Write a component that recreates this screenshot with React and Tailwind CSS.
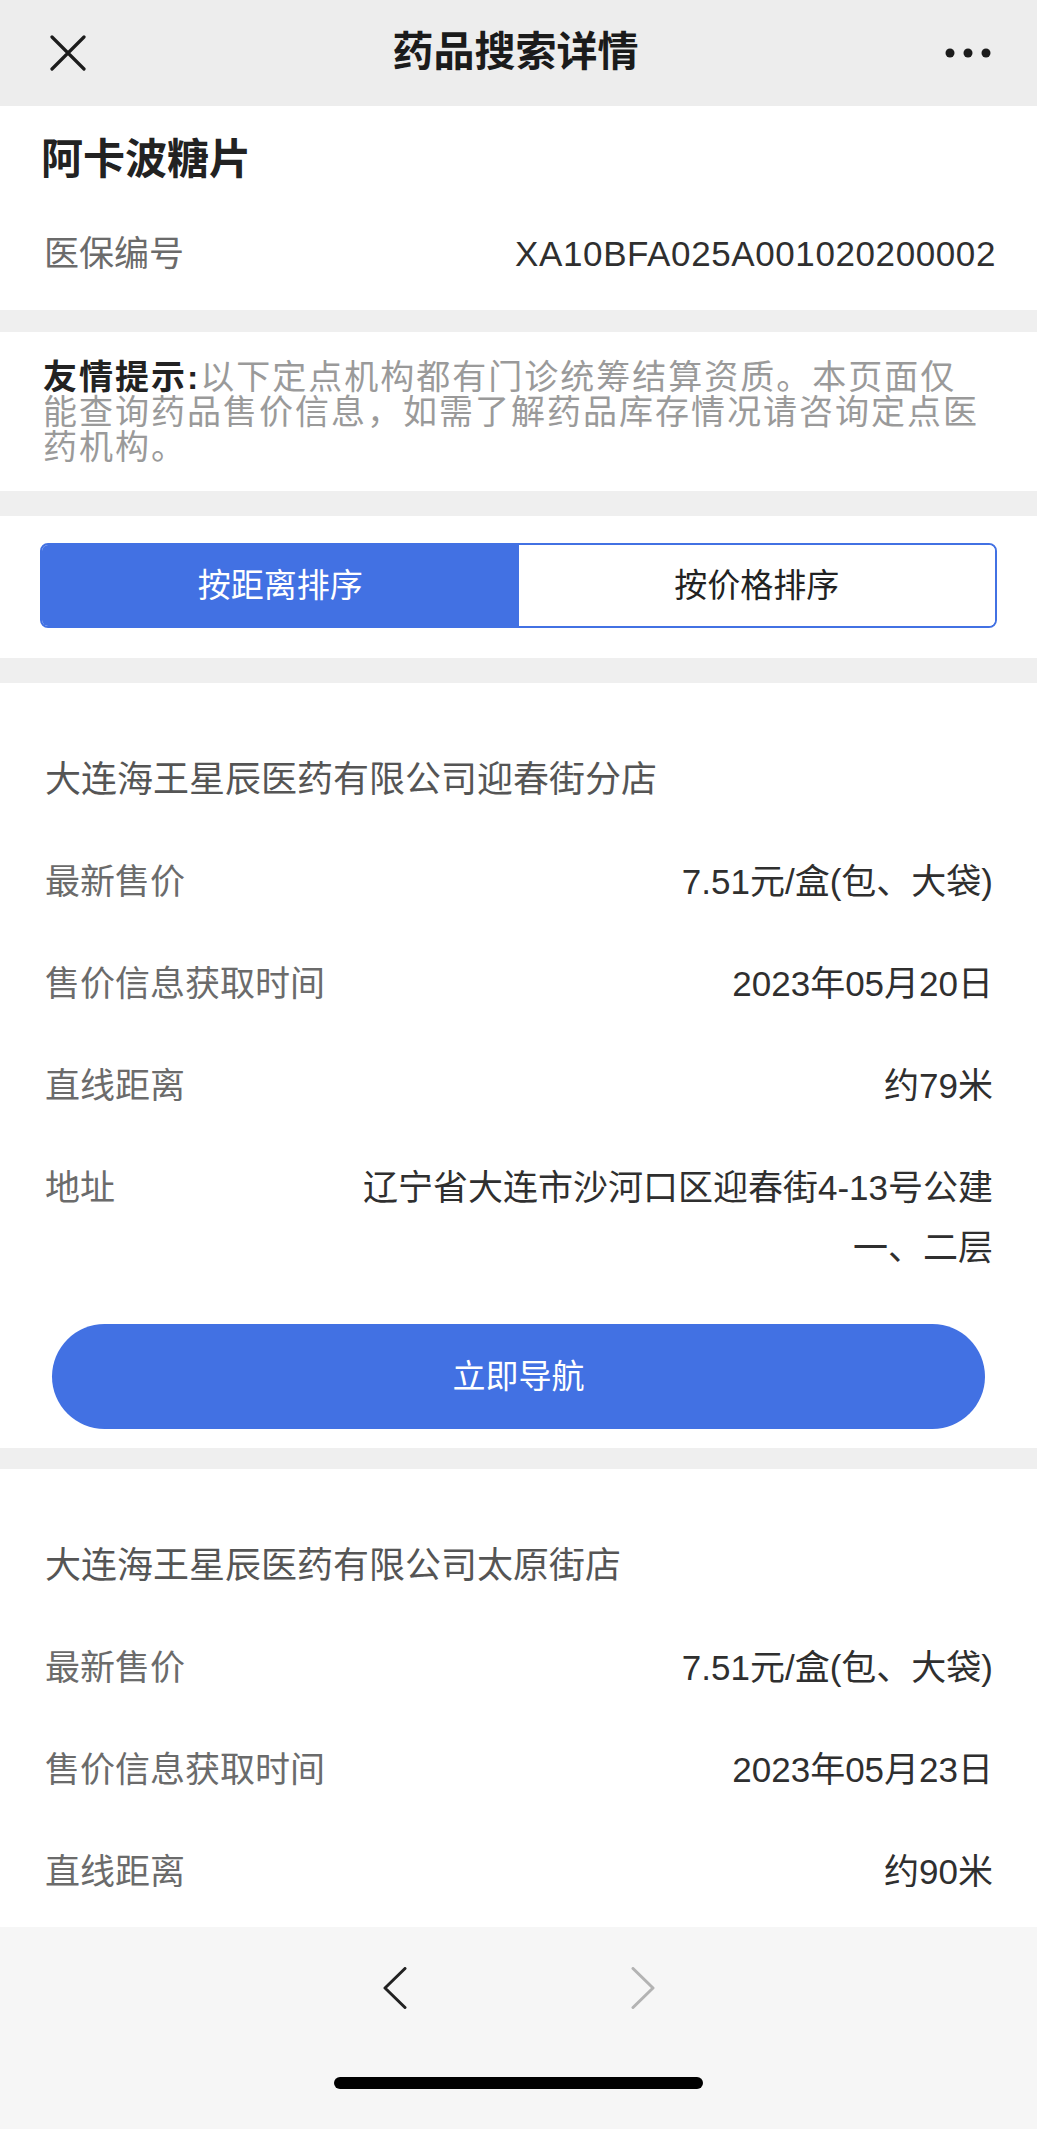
const font = "font-['Liberation_Sans','Noto_Sans_CJK_SC',sans-serif]";

const stores = [
  {
    name: "大连海王星辰医药有限公司迎春街分店",
    price: "7.51元/盒(包、大袋)",
    date: "2023年05月20日",
    distance: "约79米",
    address: "辽宁省大连市沙河口区迎春街4-13号公建一、二层",
  },
  {
    name: "大连海王星辰医药有限公司太原街店",
    price: "7.51元/盒(包、大袋)",
    date: "2023年05月23日",
    distance: "约90米",
    address: "",
  },
];

function Row({ label, children }) {
  return (
    <div className="flex py-[21px] text-[35px] leading-[60px]">
      <div className="w-[290px] shrink-0 text-[#6b6b6b]">{label}</div>
      <div className="flex-1 text-right text-[#2f2f2f]">{children}</div>
    </div>
  );
}

function StoreCard({ store }) {
  return (
    <div className="bg-white pl-[45px] pr-[44px] pt-[46px] pb-[19px]">
      <div className="py-[21px] text-[36px] leading-[60px] text-[#555]">{store.name}</div>
      <Row label="最新售价">{store.price}</Row>
      <Row label="售价信息获取时间">{store.date}</Row>
      <Row label="直线距离">{store.distance}</Row>
      {/* 第二家店的地址和按钮在屏幕外，截图里看不到 */}
      {store.address && (
        <>
          <Row label="地址">{store.address}</Row>
          <button className="mt-[25px] ml-[7px] flex h-[105px] w-[933px] items-center justify-center rounded-full bg-[#4271e3] text-[33px] text-white">
            立即导航
          </button>
        </>
      )}
    </div>
  );
}

export default function App() {
  return (
    <div className={`${font} flex h-[2129px] w-[1037px] flex-col overflow-hidden bg-[#efefef]`}>
      {/* 顶部导航 */}
      <div className="flex h-[106px] shrink-0 items-center justify-between bg-[#ededed] pl-[50px] pr-[46px]">
        <svg width="36" height="36" viewBox="0 0 36 36" className="text-[#1c1c1c]">
          <path d="M2 2 L34 34 M34 2 L2 34" stroke="currentColor" strokeWidth="3.2" strokeLinecap="round" />
        </svg>
        <div className="text-[41px] font-bold text-[#1b1b1b]">药品搜索详情</div>
        <svg width="46" height="12" viewBox="0 0 46 12" className="text-[#1c1c1c]">
          <circle cx="5" cy="6" r="4.5" fill="currentColor" />
          <circle cx="23" cy="6" r="4.5" fill="currentColor" />
          <circle cx="41" cy="6" r="4.5" fill="currentColor" />
        </svg>
      </div>

      <div className="flex-1 overflow-hidden">
        <div className="bg-white px-[41px] pt-[24px] pb-[26px]">
          <div className="text-[42px] font-bold leading-[60px] text-[#222]">阿卡波糖片</div>
          <div className="mt-[34px] flex justify-between text-[35px] leading-[60px]">
            <span className="pl-[3px] text-[#6b6b6b]">医保编号</span>
            <span className="tracking-[0.6px] text-[#2f2f2f]">XA10BFA025A001020200002</span>
          </div>
        </div>

        <div className="mt-[22px] bg-white pl-[43px] pr-[20px] pt-[28px] pb-[26px] text-[34px] leading-[35px] tracking-[2px] text-[#9a9a9a]">
          <span className="font-bold text-[#222]">友情提示:</span>以下定点机构都有门诊统筹结算资质。本页面仅
          <br />
          能查询药品售价信息，如需了解药品库存情况请咨询定点医
          <br />
          药机构。
        </div>

        <div className="mt-[25px] bg-white px-[40px] pt-[27px] pb-[30px]">
          <div className="flex h-[85px] overflow-hidden rounded-[8px] border-2 border-[#4271e3] text-[33px]">
            <div className="flex flex-1 items-center justify-center bg-[#4271e3] text-white">按距离排序</div>
            <div className="flex flex-1 items-center justify-center bg-white text-[#222]">按价格排序</div>
          </div>
        </div>

        <div className="mt-[25px] flex flex-col gap-[21px]">
          {stores.map((s) => (
            <StoreCard key={s.name} store={s} />
          ))}
        </div>
      </div>

      {/* 底部工具栏 */}
      <div className="flex h-[202px] shrink-0 flex-col items-center bg-[#f6f6f6] pt-[40px]">
        <div className="flex gap-[222px]">
          <svg width="26" height="42" viewBox="0 0 26 42">
            <path d="M23 1.5 L3 21 L23 40.5" fill="none" stroke="#222" strokeWidth="3" strokeLinecap="round" strokeLinejoin="round" />
          </svg>
          <svg width="26" height="42" viewBox="0 0 26 42">
            <path d="M3 1.5 L23 21 L3 40.5" fill="none" stroke="#b3b3b3" strokeWidth="3" strokeLinecap="round" strokeLinejoin="round" />
          </svg>
        </div>
        <div className="mt-[68px] h-[12px] w-[369px] rounded-full bg-black" />
      </div>
    </div>
  );
}
